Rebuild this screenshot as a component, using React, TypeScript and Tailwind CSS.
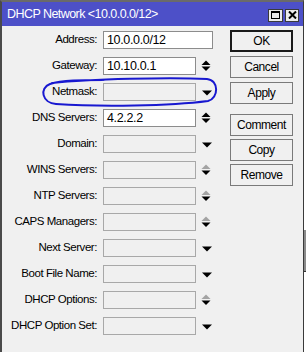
import React from "react";

type Arrow = "updown" | "updown-dis" | "down" | "none";

const rows: { label: string; value?: string; enabled: boolean; arrow: Arrow; wide?: boolean }[] = [
  { label: "Address:", value: "10.0.0.0/12", enabled: true, arrow: "none", wide: true },
  { label: "Gateway:", value: "10.10.0.1", enabled: true, arrow: "updown" },
  { label: "Netmask:", enabled: false, arrow: "down" },
  { label: "DNS Servers:", value: "4.2.2.2", enabled: true, arrow: "updown" },
  { label: "Domain:", enabled: false, arrow: "down" },
  { label: "WINS Servers:", enabled: false, arrow: "updown-dis" },
  { label: "NTP Servers:", enabled: false, arrow: "updown-dis" },
  { label: "CAPS Managers:", enabled: false, arrow: "updown-dis" },
  { label: "Next Server:", enabled: false, arrow: "down" },
  { label: "Boot File Name:", enabled: false, arrow: "down" },
  { label: "DHCP Options:", enabled: false, arrow: "updown-dis" },
  { label: "DHCP Option Set:", enabled: false, arrow: "down" },
];

function ArrowIcon({ kind }: { kind: Arrow }) {
  if (kind === "none") return null;
  if (kind === "down") {
    return (
      <svg width="10" height="6" viewBox="0 0 10 6" className="ml-[6px] mt-[1px]">
        <polygon points="0,0.5 10,0.5 5,5.5" fill="#000" />
      </svg>
    );
  }
  const upColor = kind === "updown" ? "#000" : "#a3a3a3";
  return (
    <svg width="10" height="12" viewBox="0 0 10 12" className="ml-[5px]">
      <polygon points="0.5,5 9.5,5 5,0.5" fill={upColor} />
      <polygon points="0.5,6.5 9.5,6.5 5,11" fill="#000" />
    </svg>
  );
}

function Btn({ children, primary }: { children: React.ReactNode; primary?: boolean }) {
  return (
    <div
      className={
        "h-[22px] w-[63px] flex items-center justify-center text-[12px] tracking-[-0.45px] text-black bg-[#f0f0f0] " +
        (primary ? "border-2 border-[#1a1a1a]" : "border border-[#7a7a7a]")
      }
    >
      {children}
    </div>
  );
}

export default function App() {
  return (
    <div
      className="flex w-[306px] h-[352px] overflow-hidden bg-white"
      style={{ fontFamily: '"Liberation Sans", Arial, sans-serif' }}
    >
      <div className="relative w-[304px] h-[352px] shrink-0 flex flex-col bg-[#f0f0f0] border-l-2 border-t-2 border-r border-l-[#4a4a4a] border-t-[#6a6a6a] border-r-[#3a3a3a]">
        {/* title bar */}
        <div className="h-[24px] bg-[#4d50c8] flex items-center justify-between pl-[5px] pr-[4px]">
          <span className="text-white text-[12.5px] tracking-[-0.55px] leading-none mt-[1px]">
            DHCP Network &lt;10.0.0.0/12&gt;
          </span>
          <div className="flex gap-[2px] mt-[2px]">
            <div className="w-[15px] h-[13px] bg-[#ececec] border border-[#3a3a3a] flex items-center justify-center">
              <div className="w-[9px] h-[8px] border border-black border-t-2" />
            </div>
            <div className="w-[14px] h-[13px] bg-[#ececec] border border-[#3a3a3a] flex items-center justify-center">
              <svg width="9" height="8" viewBox="0 0 9 8">
                <path d="M1 0.5 L8 7.5 M8 0.5 L1 7.5" stroke="#000" strokeWidth="2" />
              </svg>
            </div>
          </div>
        </div>

        {/* body */}
        <div className="flex">
          <div className="flex flex-col gap-[8px] pt-[5px]">
            {rows.map((r) => (
              <div key={r.label} className="flex items-center h-[18px]">
                <div className="w-[95px] text-right text-[11.5px] tracking-[-0.45px] text-black whitespace-nowrap">
                  {r.label}
                </div>
                <div
                  className={
                    "ml-[6px] h-[18px] flex items-center pl-[3px] text-[12.5px] tracking-[-0.35px] text-black " +
                    (r.wide ? "w-[110px] " : "w-[93px] ") +
                    (r.enabled ? "bg-white border border-[#8c8c8c]" : "bg-[#f0f0f0] border border-[#a8a8a8]")
                  }
                >
                  {r.value ?? ""}
                </div>
                <ArrowIcon kind={r.arrow} />
              </div>
            ))}
          </div>
          <div className="absolute left-[228px] top-[28px] flex flex-col">
            <div className="flex flex-col gap-[4px]">
              <Btn primary>OK</Btn>
              <Btn>Cancel</Btn>
              <Btn>Apply</Btn>
            </div>
            <div className="flex flex-col gap-[3px] mt-[10px]">
              <Btn>Comment</Btn>
              <Btn>Copy</Btn>
              <Btn>Remove</Btn>
            </div>
          </div>
        </div>

        {/* hand-drawn annotation */}
        <svg
          className="absolute left-[-2px] top-[-2px] pointer-events-none"
          width="304"
          height="352"
          viewBox="0 0 304 352"
        >
          <path
            d="M52 83 C 90 79, 170 77, 207 79 C 219 80, 219 98, 208 101 C 170 106, 100 107, 56 104 C 42 103, 39 88, 50 84 C 62 80, 82 80, 104 80"
            fill="none"
            stroke="#1818d0"
            strokeWidth="2"
            strokeLinecap="round"
          />
        </svg>
      </div>
      <div className="flex-1 flex flex-col">
        <div className="h-[230px]" />
        <div className="h-[41px] bg-[#8a8a8a]" />
        <div className="h-[1px] bg-[#333]" />
      </div>
    </div>
  );
}
